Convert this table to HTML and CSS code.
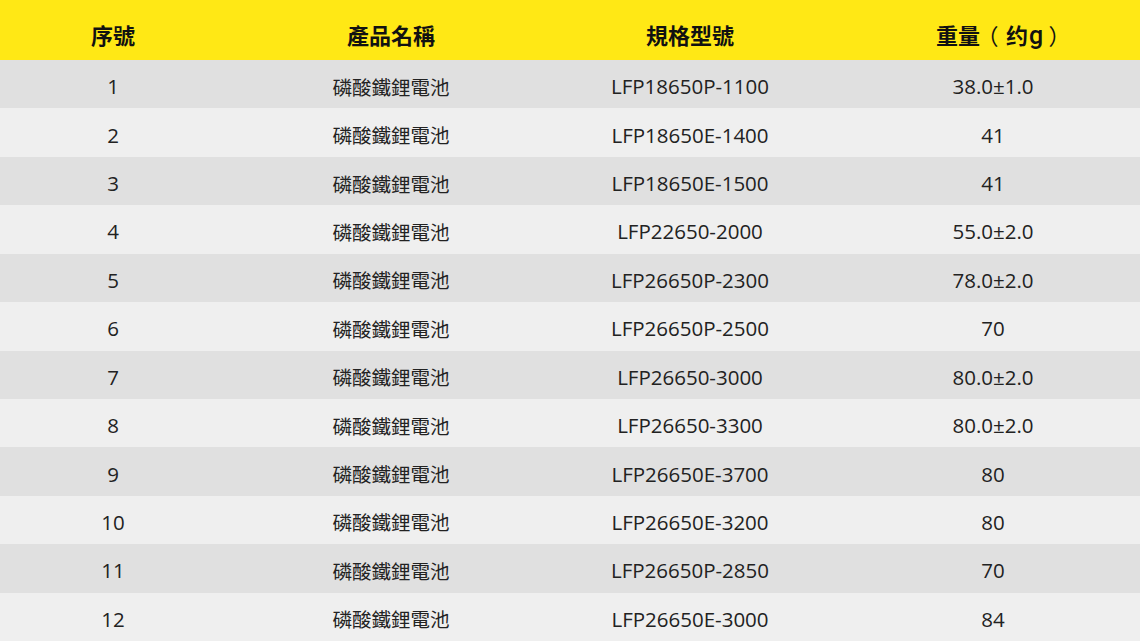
FILE: index.html
```html
<!DOCTYPE html>
<html lang="zh-Hant">
<head>
<meta charset="utf-8">
<link rel="stylesheet" href="styles.css">
</head>
<body>
<div class="table">
  <div class="row head"><div class="c c1">序號</div><div class="c c2">產品名稱</div><div class="c c3">規格型號</div><div class="c c4">重量<span class="p">（</span>约<span class="g">g</span><span class="p pr">）</span></div></div>
  <div class="row odd"><div class="c c1">1</div><div class="c c2">磷酸鐵鋰電池</div><div class="c c3">LFP18650P-1100</div><div class="c c4">38.0±1.0</div></div>
  <div class="row even"><div class="c c1">2</div><div class="c c2">磷酸鐵鋰電池</div><div class="c c3">LFP18650E-1400</div><div class="c c4">41</div></div>
  <div class="row odd"><div class="c c1">3</div><div class="c c2">磷酸鐵鋰電池</div><div class="c c3">LFP18650E-1500</div><div class="c c4">41</div></div>
  <div class="row even"><div class="c c1">4</div><div class="c c2">磷酸鐵鋰電池</div><div class="c c3">LFP22650-2000</div><div class="c c4">55.0±2.0</div></div>
  <div class="row odd"><div class="c c1">5</div><div class="c c2">磷酸鐵鋰電池</div><div class="c c3">LFP26650P-2300</div><div class="c c4">78.0±2.0</div></div>
  <div class="row even"><div class="c c1">6</div><div class="c c2">磷酸鐵鋰電池</div><div class="c c3">LFP26650P-2500</div><div class="c c4">70</div></div>
  <div class="row odd"><div class="c c1">7</div><div class="c c2">磷酸鐵鋰電池</div><div class="c c3">LFP26650-3000</div><div class="c c4">80.0±2.0</div></div>
  <div class="row even"><div class="c c1">8</div><div class="c c2">磷酸鐵鋰電池</div><div class="c c3">LFP26650-3300</div><div class="c c4">80.0±2.0</div></div>
  <div class="row odd"><div class="c c1">9</div><div class="c c2">磷酸鐵鋰電池</div><div class="c c3">LFP26650E-3700</div><div class="c c4">80</div></div>
  <div class="row even"><div class="c c1">10</div><div class="c c2">磷酸鐵鋰電池</div><div class="c c3">LFP26650E-3200</div><div class="c c4">80</div></div>
  <div class="row odd"><div class="c c1">11</div><div class="c c2">磷酸鐵鋰電池</div><div class="c c3">LFP26650P-2850</div><div class="c c4">70</div></div>
  <div class="row even"><div class="c c1">12</div><div class="c c2">磷酸鐵鋰電池</div><div class="c c3">LFP26650E-3000</div><div class="c c4">84</div></div>
</div>
</body>
</html>
```
FILE: styles.css
```css
html, body {
  margin: 0;
  padding: 0;
  background: #efefef;
}
body {
  font-family: "Open Sans", "Noto Sans CJK TC", sans-serif;
  font-weight: 400;
  color: #222;
}
.table {
  width: 1140px;
  height: 641px;
  display: grid;
  grid-template-rows: 60px repeat(12, 1fr);
}
.row {
  display: grid;
  grid-template-columns: 226px 330px 268px 316px;
  align-items: center;
  font-size: 20.5px;
}
.odd { background: #e0e0e0; }
.even { background: #efefef; }
.c {
  text-align: center;
  padding-top: 4px;
}
.c2 {
  font-family: "Noto Sans CJK TC", sans-serif;
  font-weight: 400;
  font-size: 19.5px;
}
.c4 { padding-left: 22px; }

.head {
  background: #ffe815;
  font-size: 22px;
  color: #111;
  padding-top: 21px;
  align-items: start;
}
.head .c {
  font-family: "Noto Sans CJK TC", sans-serif;
  font-weight: 700;
  font-size: 22px;
  padding-top: 0;
  line-height: 1.2;
}
.head .c4 { padding-left: 36px; }
.p {
  display: inline-block;
  width: 26px;
  text-align: center;
  font-weight: 400;
  font-feature-settings: "halt";
}
.pr { width: 20px; }
.g {
  font-family: Roboto, sans-serif;
  font-weight: 500;
  font-size: 25px;
  margin: 0 1px;
}
```
